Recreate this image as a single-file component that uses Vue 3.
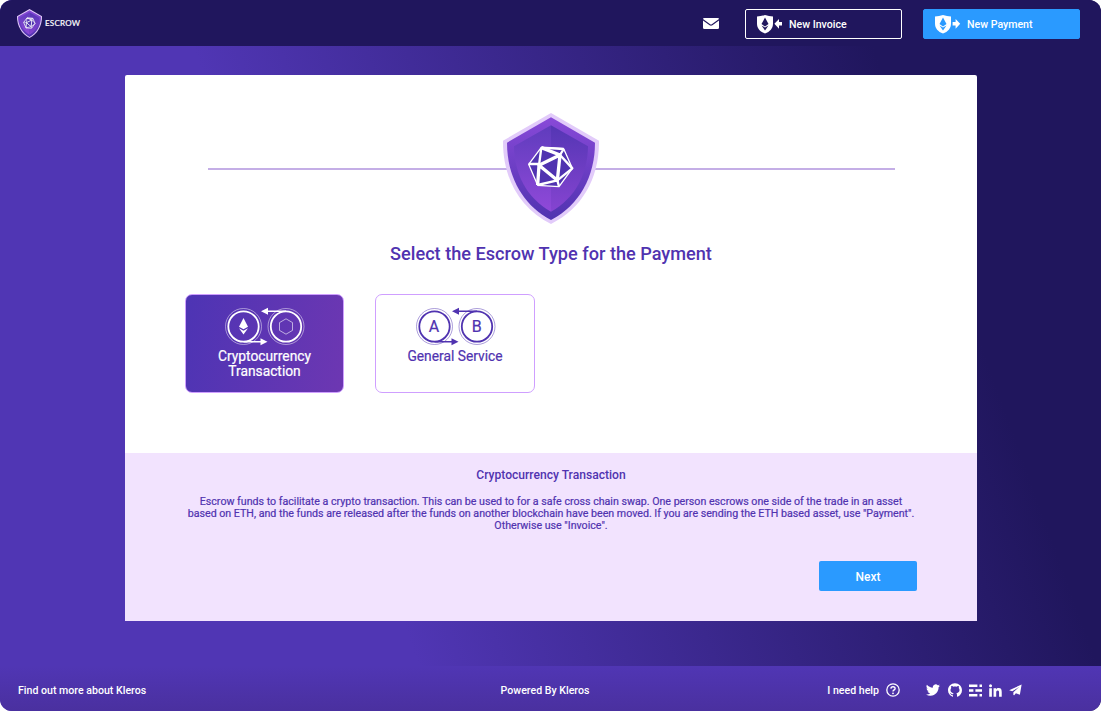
<template>
  <div class="page">
    <header class="navbar">
      <a class="brand">
        <EscrowShield class="brand-shield" small />
        <span class="brand-name">ESCROW</span>
      </a>
      <div class="nav-actions">
        <svg class="mail-icon" viewBox="0 0 16 12" preserveAspectRatio="none">
          <path d="M1.3 0h13.4Q16 0 16 1.2L8.8 6.9Q8 7.4 7.2 6.9L0 1.2Q0 0 1.3 0Z" />
          <path d="M0 2.7 6.6 7.9Q8 8.8 9.4 7.9L16 2.7V10.6Q16 12 14.6 12H1.4Q0 12 0 10.6Z" />
        </svg>
        <button
          v-for="action in actions"
          :key="action.label"
          class="btn-nav"
          :class="action.type"
        >
          <svg class="action-icon" viewBox="0 0 26 19">
            <path
              fill="#fff"
              fill-rule="evenodd"
              d="M0 1.6Q4 1.4 8 0 12 1.4 16 1.6V8.5C16 13.5 13 16.6 8 18.6 3 16.6 0 13.5 0 8.5ZM8 2.6 4.5 9.1 8 11.4 11.5 9.1ZM4.5 10.4 8 15.4 11.5 10.4 8 12.6Z"
            />
            <path v-if="action.type === 'invoice'" fill="#fff" d="M17.4 8.8 22 3.9V7.1H25V10.5H22V13.7Z" />
            <path v-else fill="#fff" d="M25.2 8.8 20.6 3.9V7.1H17.6V10.5H20.6V13.7Z" />
          </svg>
          <span>{{ action.label }}</span>
        </button>
      </div>
    </header>

    <main class="card">
      <section class="card-top">
        <div class="divider">
          <EscrowShield class="main-shield" />
        </div>
        <h1>Select the Escrow Type for the Payment</h1>
        <div class="types">
          <div
            v-for="type in types"
            :key="type.id"
            class="type-card"
            :class="{ selected: selected === type.id }"
            @click="selected = type.id"
          >
            <svg class="type-icon" viewBox="0 0 80 40">
              <g fill="none" stroke="currentColor">
                <circle cx="18.5" cy="19.5" r="18" stroke-width="0.8" opacity="0.6" />
                <circle cx="61" cy="19.5" r="18" stroke-width="0.8" opacity="0.6" />
                <circle cx="18.5" cy="19.5" r="15.2" stroke-width="1.8" />
                <circle cx="61" cy="19.5" r="15.2" stroke-width="1.8" />
                <path d="M61 4.3H42M18.5 34.7H37" stroke-width="1.4" />
              </g>
              <path fill="currentColor" d="M36 4.3 43 .8V7.8ZM42.5 34.7 35.5 31.2V38.2Z" />
              <g v-if="type.id === 'crypto'">
                <path fill="currentColor" d="M18.5 11 14 19.8 18.5 22.3 23 19.8ZM14 21.3 18.5 27.5 23 21.3 18.5 23.7Z" />
                <path fill="none" stroke="currentColor" stroke-width="0.8" opacity="0.75" d="M61 11.8 67.5 15.6V23.4L61 27.2 54.5 23.4V15.6Z" />
              </g>
              <g v-else class="letters">
                <text x="18" y="25.3">A</text>
                <text x="60.7" y="25.3">B</text>
              </g>
            </svg>
            <span class="type-name">{{ type.name }}</span>
          </div>
        </div>
      </section>
      <section class="card-bottom">
        <h2>{{ current.title }}</h2>
        <p>{{ current.description }}</p>
        <button class="btn-next">Next</button>
      </section>
    </main>

    <footer class="footer">
      <a class="footer-left">Find out more about Kleros</a>
      <a class="footer-center">Powered By Kleros</a>
      <div class="footer-right">
        <a class="help">
          I need help
          <svg viewBox="0 0 14 14">
            <circle cx="7" cy="7" r="6.2" fill="none" stroke="currentColor" stroke-width="1.3" />
            <path d="M4.9 5.6Q5 3.7 7 3.7 9.1 3.7 9.1 5.5 9.1 6.5 8 7 7 7.5 7 8.5" fill="none" stroke="currentColor" stroke-width="1.4" />
            <circle cx="7" cy="10.3" r=".9" fill="currentColor" />
          </svg>
        </a>
        <div class="social">
          <svg v-for="icon in social" :key="icon.name" :viewBox="icon.box" :class="icon.name">
            <path :d="icon.path" />
          </svg>
        </div>
      </div>
    </footer>
  </div>
</template>

<script setup>
import { computed, h, ref } from 'vue'

const selected = ref('crypto')

const actions = [
  { type: 'invoice', label: 'New Invoice' },
  { type: 'payment', label: 'New Payment' }
]

const types = [
  {
    id: 'crypto',
    name: 'Cryptocurrency Transaction',
    title: 'Cryptocurrency Transaction',
    description:
      'Escrow funds to facilitate a crypto transaction. This can be used to for a safe cross chain swap. One person escrows one side of the trade in an asset based on ETH, and the funds are released after the funds on another blockchain have been moved. If you are sending the ETH based asset, use "Payment". Otherwise use "Invoice".'
  },
  {
    id: 'service',
    name: 'General Service',
    title: 'General Service',
    description: ''
  }
]

const current = computed(() => types.find(t => t.id === selected.value))

const social = [
  {
    name: 'twitter',
    box: '0 0 24 24',
    path: 'M23.95 4.57a10 10 0 0 1-2.82.77 4.96 4.96 0 0 0 2.16-2.72c-.95.55-2 .96-3.13 1.18a4.92 4.92 0 0 0-8.38 4.48C7.69 8.09 4.07 6.13 1.64 3.16a4.92 4.92 0 0 0 1.52 6.57 4.9 4.9 0 0 1-2.23-.61v.06a4.92 4.92 0 0 0 3.95 4.83 5 5 0 0 1-2.21.08 4.94 4.94 0 0 0 4.6 3.42A9.87 9.87 0 0 1 0 19.54a13.99 13.99 0 0 0 7.55 2.21c9.05 0 14-7.5 14-13.98 0-.21 0-.42-.02-.63a9.94 9.94 0 0 0 2.46-2.55z'
  },
  {
    name: 'github',
    box: '64 64 896 896',
    path: 'M511.6 76.3C264.3 76.2 64 276.4 64 523.5 64 718.9 189.3 885 363.8 946c23.5 5.9 19.9-10.8 19.9-22.2v-77.5c-135.7 15.9-141.2-73.9-150.3-88.9C215 726 171.5 718 184.5 703c30.9-15.9 62.4 4 98.9 57.9 26.4 39.1 77.9 32.5 104 26 5.7-23.5 17.9-44.5 34.7-60.8-140.6-25.2-199.2-111-199.2-213 0-49.5 16.3-95 48.3-131.7-20.4-60.5 1.9-112.3 4.9-120 58.1-5.2 118.5 41.6 123.2 45.3 33-8.9 70.7-13.6 112.9-13.6 42.4 0 80.2 4.9 113.5 13.9 11.3-8.6 67.3-48.8 121.3-43.9 2.9 7.7 24.7 58.3 5.5 118 32.4 36.8 48.9 82.7 48.9 132.3 0 102.2-59 188.1-200 212.9a127.5 127.5 0 0 1 38.1 91v112.5c.8 9 0 17.9 15 17.9 177.1-59.7 304.6-227 304.6-424.1 0-247.2-200.4-447.3-447.5-447.3z'
  },
  {
    name: 'blog',
    box: '0 0 13 13',
    path: 'M0 .5H8.4V3H0ZM10.5 .5H13V3H10.5ZM0 5.3H4.4V7.8H0ZM6.4 5.3H13V7.8H6.4ZM0 10H8.4V12.5H0ZM10.5 10H13V12.5H10.5Z'
  },
  {
    name: 'linkedin',
    box: '0 0 24 24',
    path: 'M.4 8H5.3V23.5H.4ZM2.85 .5a2.8 2.8 0 1 1 0 5.6 2.8 2.8 0 0 1 0-5.6ZM8.4 8H13.1V10.1C13.9 8.6 15.6 7.6 17.8 7.6 22.5 7.6 23.5 10.7 23.5 14.9V23.5H18.6V15.9C18.6 14 18.5 11.8 16.1 11.8 13.7 11.8 13.3 13.7 13.3 15.7V23.5H8.4Z'
  },
  {
    name: 'telegram',
    box: '0 0 14 12',
    path: 'M13.6 .1 11.7 11.2 7.4 9.4 5.6 11.7 4.7 11.4V8.3L11.3 2.5 3.5 7.4 .2 6.2Z'
  }
]

// Shield with the Kleros icosahedron, used in the navbar and above the title
const EscrowShield = props => {
  const id = props.small ? 's' : 'l'
  const gradient = (name, stops) =>
    h('linearGradient', { id: name + id, x1: 0, y1: 0, x2: 0, y2: 1 }, [
      h('stop', { offset: 0, 'stop-color': stops[0] }),
      h('stop', { offset: 1, 'stop-color': stops[1] })
    ])
  const stroke = { fill: 'none', stroke: '#fff', 'stroke-linejoin': 'round' }
  return h('svg', { viewBox: '39 40 288 333' }, [
    h('defs', [
      gradient('rim', ['#8849d8', '#5033b0']),
      gradient('left', ['#5f3cbd', '#9049d9']),
      gradient('right', ['#5436b4', '#8644d1'])
    ]),
    h('path', { fill: '#e2cbfa', d: 'M183 40 327 123C328 235 278 325 183 373 88 325 38 235 39 123Z' }),
    h('path', { fill: `url(#rim${id})`, d: 'M183 53 315 129C315 228 270 315 183 361 96 315 51 228 51 129Z' }),
    h('path', { fill: `url(#left${id})`, d: 'M183 77V336C108 295 73 220 72 140Z' }),
    h('path', { fill: `url(#right${id})`, d: 'M183 77V336C258 295 293 220 294 140Z' }),
    h('path', { fill: '#5033b0', d: 'M154 143 221 147 247 206 207 261 143 257 116 194Z' }),
    h('path', { ...stroke, 'stroke-width': props.small ? 9 : 4, d: 'M154 143 221 147 247 206 207 261 143 257 116 194Z' }),
    h('path', { ...stroke, 'stroke-width': 10, d: 'M210 166 147 197 202 242ZM154 144 210 166M147 197 143 256' }),
    h('path', { ...stroke, 'stroke-width': 7, d: 'M154 144 147 197M116 193H147M143 256 202 242M207 260 202 242 247 206 210 166 221 148M154 144 221 148' })
  ])
}
EscrowShield.props = { small: Boolean }
</script>

<style>
body {
  background: #fff;
}
</style>

<style scoped>
.page {
  display: flex;
  flex-direction: column;
  width: 1101px;
  height: 711px;
  border-radius: 12px;
  overflow: hidden;
  background: linear-gradient(70deg, #5036b4 32%, #20165d 82%);
  font-family: Roboto, "Liberation Sans", sans-serif;
  font-weight: 500;
  color: #fff;
}
.navbar {
  display: flex;
  align-items: center;
  justify-content: space-between;
  box-sizing: border-box;
  height: 46px;
  padding: 1px 21px 0 17px;
  background: #20165d;
}
.brand {
  display: flex;
  align-items: center;
  gap: 3px;
}
.brand-shield {
  width: 25px;
  height: 29px;
}
.brand-name {
  margin-top: -2px;
  font-family: Lato, sans-serif;
  font-size: 8px;
  font-weight: 500;
  letter-spacing: 0.25px;
  -webkit-text-stroke: 0.15px currentColor;
}
.nav-actions {
  display: flex;
  align-items: center;
}
.mail-icon {
  width: 16px;
  height: 11px;
  margin: -1px 26px 0 0;
  fill: #fff;
}
.btn-nav {
  display: flex;
  align-items: center;
  gap: 6px;
  box-sizing: border-box;
  width: 157px;
  height: 30px;
  padding: 1px 11px 0;
  border: 1px solid #fff;
  border-radius: 2px;
  background: none;
  color: #fff;
  font: inherit;
  font-size: 10.6px;
}
.btn-nav + .btn-nav {
  margin-left: 21px;
}
.btn-nav.payment {
  background: #2a9aff;
  border-color: #2a9aff;
}
.action-icon {
  width: 26px;
  height: 19px;
}
.card {
  width: 852px;
  height: 546px;
  margin: 29px auto 45px 125px;
  border-radius: 2px 2px 0 0;
  overflow: hidden;
  color: #5033b0;
  text-align: center;
}
.card-top {
  box-sizing: border-box;
  height: 378px;
  padding: 38px 60px 0;
  background: #fff;
}
.divider {
  display: flex;
  justify-content: center;
  margin: 0 22px;
  background: linear-gradient(#c4aee6, #c4aee6) 1px 55px / 687px 2px no-repeat;
}
.main-shield {
  display: block;
  width: 96px;
  height: 111px;
}
h1 {
  margin: 18px 0 0;
  font-size: 18.15px;
  font-weight: 500;
  line-height: 24px;
}
.types {
  display: flex;
  gap: 31px;
  margin-top: 28px;
}
.type-card {
  display: flex;
  flex-direction: column;
  align-items: center;
  box-sizing: border-box;
  width: 159px;
  height: 99px;
  padding: 12px 20px 0;
  border: 1px solid #cf9fff;
  border-radius: 7px;
  cursor: pointer;
}
.type-card:last-child {
  width: 160px;
}
.type-card:last-child .type-icon {
  margin-left: 1px;
}
.type-card.selected {
  background: linear-gradient(100deg, #4d34b4, #6d37b2);
  color: #fff;
}
.type-icon {
  width: 80px;
  height: 40px;
  flex-shrink: 0;
}
.letters {
  fill: currentColor;
  font-size: 16px;
  font-weight: 400;
  text-anchor: middle;
  stroke: currentColor;
  stroke-width: 0.2px;
}
.type-name {
  margin-top: 2px;
  font-size: 13.8px;
  font-weight: 400;
  line-height: 15px;
  -webkit-text-stroke: 0.2px currentColor;
}
.card-bottom {
  box-sizing: border-box;
  height: 168px;
  padding: 13px 60px 0;
  background: #f2e3fe;
}
h2 {
  margin: 0;
  font-size: 12.1px;
  font-weight: 500;
  line-height: 18px;
}
p {
  height: 36px;
  margin: 12px 0 0;
  font-size: 10.65px;
  font-weight: 400;
  line-height: 12px;
  -webkit-text-stroke: 0.2px currentColor;
}
.btn-next {
  display: block;
  width: 98px;
  height: 30px;
  margin: 29px 0 0 auto;
  padding: 2px 0 0;
  border: none;
  border-radius: 2px;
  background: #2a9aff;
  color: #fff;
  font: inherit;
  font-size: 12px;
}
.footer {
  display: grid;
  grid-template-columns: 1fr auto 1fr;
  align-items: center;
  box-sizing: border-box;
  height: 45px;
  padding: 3px 79px 0 18px;
  background: linear-gradient(#5036b4, #4a309f);
  font-size: 10.6px;
}
.footer-center {
  margin-left: 50px;
}
.footer-right {
  display: flex;
  align-items: center;
  justify-content: flex-end;
}
.help {
  display: flex;
  align-items: center;
  gap: 7px;
  margin-right: 26px;
}
.help svg {
  width: 14px;
  height: 14px;
}
.social {
  display: flex;
  align-items: center;
  gap: 7px;
  fill: #fff;
}
.social svg {
  width: 14px;
  height: 14px;
}
.social .twitter {
  margin-right: 1px;
}
.social .blog,
.social .linkedin {
  width: 13px;
  height: 13px;
}
.social .telegram {
  width: 13px;
  height: 12px;
}
</style>
